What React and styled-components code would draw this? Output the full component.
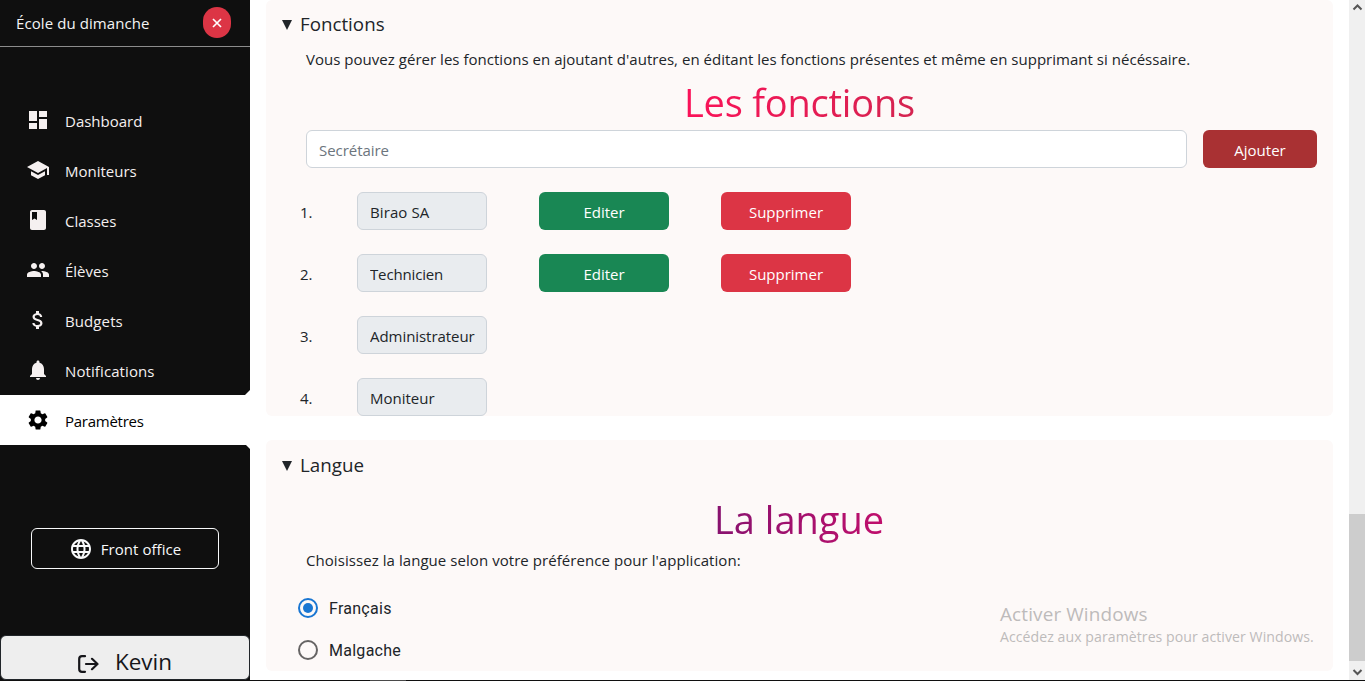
import React from "react";
import styled, { createGlobalStyle } from "styled-components";
import {
  MdDashboard,
  MdSchool,
  MdClass,
  MdPeople,
  MdAttachMoney,
  MdNotifications,
  MdSettings,
  MdLanguage,
} from "react-icons/md";

const GlobalStyle = createGlobalStyle`
  *, *::before, *::after { box-sizing: border-box; }
  body {
    margin: 0;
    overflow: hidden;
    background: #fff;
    color: #212529;
    font-family: "Open Sans", "Noto Sans", sans-serif;
    font-size: 15px;
    line-height: 24px;
  }
  button, input { font: inherit; letter-spacing: inherit; }
  h1, h2, p, ol { margin: 0; padding: 0; font-weight: 400; }
`;

const Page = styled.div`
  display: flex;
  flex-direction: column;
  height: 681px;
  width: 1365px;
`;

const Body = styled.div`
  display: flex;
  height: 680px;
`;

const Taskbar = styled.div`
  height: 1px;
  padding-left: 370px;
  background: #101010;
`;

const TaskbarItem = styled.div`
  width: 36px;
  height: 1px;
  background: #4a4a4a;
`;

const Sidebar = styled.aside`
  display: flex;
  flex-direction: column;
  width: 250px;
  flex: none;
  background: #0f0f0f;
  color: #f5f0f0;
`;

const Brand = styled.header`
  display: flex;
  align-items: center;
  justify-content: space-between;
  height: 47px;
  padding: 0 19px 0 16px;
  border-bottom: 1px solid #8c8c8c;
  color: #f4f4f4;
  letter-spacing: 0.08px;
`;

const CloseButton = styled.button`
  display: grid;
  place-items: center;
  width: 28px;
  height: 31px;
  margin-bottom: 2px;
  padding: 1px 0 0;
  border: 0;
  border-radius: 14px;
  background: #dc3545;
`;

const Nav = styled.nav`
  display: flex;
  flex-direction: column;
  padding-top: 48px;
`;

const NavItem = styled.a`
  display: flex;
  align-items: center;
  gap: 15px;
  height: 50px;
  padding-left: 26px;
  background: ${(p) => (p.$active ? "#fff" : "transparent")};
  color: ${(p) => (p.$active ? "#000" : "#f5f0f0")};
  letter-spacing: ${(p) => p.$spacing || "0"};
  svg { width: 24px; height: 24px; margin-top: -1px; }
  span { padding-top: 2px; }
`;

const CornerEdge = styled.div`
  height: 0;
  display: flex;
  justify-content: flex-end;
  align-items: ${(p) => (p.$above ? "flex-end" : "flex-start")};
  svg { flex: none; }
`;

const FrontOffice = styled.button`
  display: flex;
  align-items: center;
  justify-content: center;
  gap: 8px;
  width: 188px;
  height: 41px;
  margin: 83px 0 0 31px;
  padding: 0;
  border: 1px solid #f8f9fa;
  border-radius: 6px;
  background: transparent;
  color: #f8f9fa;
  letter-spacing: 0.05px;
  svg { width: 24px; height: 24px; }
  span { padding-top: 1px; }
`;

const UserButton = styled.button`
  display: flex;
  align-items: center;
  justify-content: center;
  gap: 16px;
  width: 250px;
  height: 45px;
  margin-top: auto;
  padding: 9px 0 0;
  border: 1px solid #212529;
  border-radius: 6px;
  background: #eee;
  color: #16161a;
  font-size: 22.5px;
  svg { margin-top: 3px; }
`;

const Main = styled.main`
  display: flex;
  flex-direction: column;
  gap: 24px;
  flex: 1;
  padding: 0 16px;
`;

const Card = styled.section`
  display: flex;
  flex-direction: column;
  height: ${(p) => p.$height}px;
  padding-top: ${(p) => p.$top}px;
  border-radius: 6px;
  background: #fdf9f8;
`;

const Summary = styled.h2`
  display: flex;
  align-items: center;
  gap: 8px;
  height: 30px;
  padding-left: 16px;
  font-size: 18.75px;
  svg { margin-top: 2px; }
`;

const Paragraph = styled.p`
  height: 24px;
  margin-top: ${(p) => p.$top || 0}px;
  padding-left: 40px;
  letter-spacing: ${(p) => p.$spacing || "0"};
`;

const Title = styled.h1`
  width: fit-content;
  margin: ${(p) => p.$margin};
  background: ${(p) => p.$fill};
  background-clip: text;
  -webkit-background-clip: text;
  color: transparent;
  font-size: 38px;
  line-height: 48px;
  white-space: nowrap;
  letter-spacing: ${(p) => p.$spacing || "0"};
`;

const AddForm = styled.form`
  display: flex;
  gap: 16px;
  padding: 0 16px 0 40px;
`;

const Field = styled.input`
  height: 38px;
  min-width: 0;
  padding: 1px 0 0 12px;
  border: 1px solid #ced4da;
  border-radius: 6px;
  background: ${(p) => (p.readOnly ? "#e9ecef" : "#fff")};
  color: #212529;
  outline: 0;
  letter-spacing: ${(p) => p.$spacing || "0"};
  &::placeholder { color: #6c757d; opacity: 1; }
`;

const GrowField = styled(Field)`
  flex: 1;
`;

const Button = styled.button`
  height: 38px;
  width: ${(p) => p.$width}px;
  padding: 2px 0 0;
  border: 0;
  border-radius: 6px;
  background: ${(p) => p.$color};
  color: #fff;
`;

const RoleList = styled.ol`
  display: flex;
  flex-direction: column;
  gap: 24px;
  padding: 24px 0 0 34px;
  list-style: none;
`;

const RoleRow = styled.li`
  display: grid;
  grid-template-columns: 5px 130px 130px 130px;
  column-gap: 52px;
  align-items: center;
`;

const RoleNumber = styled.span`
  padding-top: 2px;
  letter-spacing: -0.2px;
  white-space: nowrap;
`;

const Choices = styled.div`
  display: flex;
  flex-direction: column;
  padding: 15px 0 0 30px;
`;

const Choice = styled.label`
  display: flex;
  align-items: center;
  gap: 9px;
  height: 42px;
  font-family: Roboto, sans-serif;
  font-size: 16px;
  letter-spacing: 0.27px;
  span { padding-top: 1px; }
`;

const ScrollTrack = styled.div`
  display: flex;
  flex-direction: column;
  justify-content: space-between;
  align-items: center;
  width: 16px;
  flex: none;
  background: #f0f0f0;
  svg { display: block; flex: none; }
`;

const ScrollThumb = styled.div`
  width: 16px;
  height: 147px;
  margin-top: 495px;
  background: #cdcdcd;
`;

const Watermark = styled.div`
  position: absolute;
  left: 1000px;
  top: 601px;
  color: #bdbbbb;
  white-space: nowrap;
  font-size: 14.1px;
  line-height: 20px;
  letter-spacing: 0.06px;
`;

const WatermarkTitle = styled.div`
  font-size: 18.9px;
  line-height: 26px;
  letter-spacing: 0.14px;
`;

const navItems = [
  { label: "Dashboard", icon: MdDashboard },
  { label: "Moniteurs", icon: MdSchool },
  { label: "Classes", icon: MdClass },
  { label: "Élèves", icon: MdPeople },
  { label: "Budgets", icon: MdAttachMoney, spacing: "0.1px" },
  { label: "Notifications", icon: MdNotifications, spacing: "0.1px" },
];

const roles = [
  { name: "Birao SA", editable: true, spacing: "0.1px" },
  { name: "Technicien", editable: true, spacing: "-0.15px" },
  { name: "Administrateur", spacing: "-0.05px" },
  { name: "Moniteur" },
];

const Triangle = () => (
  <svg width="10" height="10" viewBox="0 0 10 10">
    <path d="M0 0H10L5 10Z" fill="#212529" />
  </svg>
);

const Radio = ({ checked }) => (
  <svg width="24" height="24" viewBox="0 0 24 24">
    <circle cx="12" cy="12" r="9" fill="none" strokeWidth="2" stroke={checked ? "#1976d2" : "#666464"} />
    {checked && <circle cx="12" cy="12" r="5" fill="#1976d2" />}
  </svg>
);

const LogoutIcon = () => (
  <svg width="21" height="18" viewBox="0 0 21 18" fill="none" stroke="#16161a" strokeWidth="2.2" strokeLinecap="round" strokeLinejoin="round">
    <path d="M7 1.2H4Q1.2 1.2 1.2 4V14Q1.2 16.8 4 16.8H7M8 9H19.5M14 3.8L19.5 9L14 14.2" />
  </svg>
);

const Arrow = ({ up }) => (
  <svg width="16" height="15" viewBox="0 0 16 15" fill="none" stroke="#555" strokeWidth="2">
    <path d={up ? "M4.5 9.5L8.5 5.5L12.5 9.5" : "M4.5 5L8.5 9L12.5 5"} />
  </svg>
);

export default function App() {
  return (
    <Page>
      <GlobalStyle />
      <Body>
        <Sidebar>
          <Brand>
            <span>École du dimanche</span>
            <CloseButton aria-label="Fermer">
              <svg width="10" height="10" viewBox="0 0 10 10" stroke="#fff" strokeWidth="1.7">
                <path d="M1 1L9 9M9 1L1 9" />
              </svg>
            </CloseButton>
          </Brand>
          <Nav>
            {navItems.map(({ label, icon: Icon, spacing }) => (
              <NavItem key={label} $spacing={spacing}>
                <Icon />
                <span>{label}</span>
              </NavItem>
            ))}
            <CornerEdge $above>
              <svg width="5" height="5"><path d="M5 0V5H0Z" fill="#fff" /></svg>
            </CornerEdge>
            <NavItem $active $spacing="-0.26px">
              <MdSettings />
              <span>Paramètres</span>
            </NavItem>
            <CornerEdge>
              <svg width="4" height="4"><path d="M0 0H4V4Z" fill="#fff" /></svg>
            </CornerEdge>
          </Nav>
          <FrontOffice>
            <MdLanguage />
            <span>Front office</span>
          </FrontOffice>
          <UserButton>
            <LogoutIcon />
            <span>Kevin</span>
          </UserButton>
        </Sidebar>
        <Main>
          <Card $height={416} $top={9}>
            <Summary><Triangle /><span>Fonctions</span></Summary>
            <Paragraph $top={8} $spacing="0.026px">
              Vous pouvez gérer les fonctions en ajoutant d'autres, en éditant les fonctions présentes et même en supprimant si nécéssaire.
            </Paragraph>
            <Title $fill="linear-gradient(90deg, #fb1259, #d42450)" $margin="7px auto 4px 418px" $spacing="-0.22px">Les fonctions</Title>
            <AddForm>
              <GrowField placeholder="Secrétaire" $spacing="-0.05px" />
              <Button type="button" $width={114} $color="#a93133">Ajouter</Button>
            </AddForm>
            <RoleList>
              {roles.map((role, i) => (
                <RoleRow key={role.name}>
                  <RoleNumber>{i + 1}.</RoleNumber>
                  <Field readOnly value={role.name} $spacing={role.spacing} />
                  {role.editable && <Button $width={130} $color="#198754">Editer</Button>}
                  {role.editable && <Button $width={130} $color="#dc3545">Supprimer</Button>}
                </RoleRow>
              ))}
            </RoleList>
          </Card>
          <Card $height={231} $top={10}>
            <Summary><Triangle /><span>Langue</span></Summary>
            <Title $fill="linear-gradient(90deg, #87126f, #c00f6c)" $margin="15px auto 5px 448px">La langue</Title>
            <Paragraph $spacing="0.06px">Choisissez la langue selon votre préférence pour l'application:</Paragraph>
            <Choices>
              <Choice><Radio checked /><span>Français</span></Choice>
              <Choice><Radio /><span>Malgache</span></Choice>
            </Choices>
          </Card>
        </Main>
        <ScrollTrack>
          <Arrow up />
          <ScrollThumb />
          <Arrow />
        </ScrollTrack>
      </Body>
      <Taskbar><TaskbarItem /></Taskbar>
      <Watermark>
        <WatermarkTitle>Activer Windows</WatermarkTitle>
        Accédez aux paramètres pour activer Windows.
      </Watermark>
    </Page>
  );
}
